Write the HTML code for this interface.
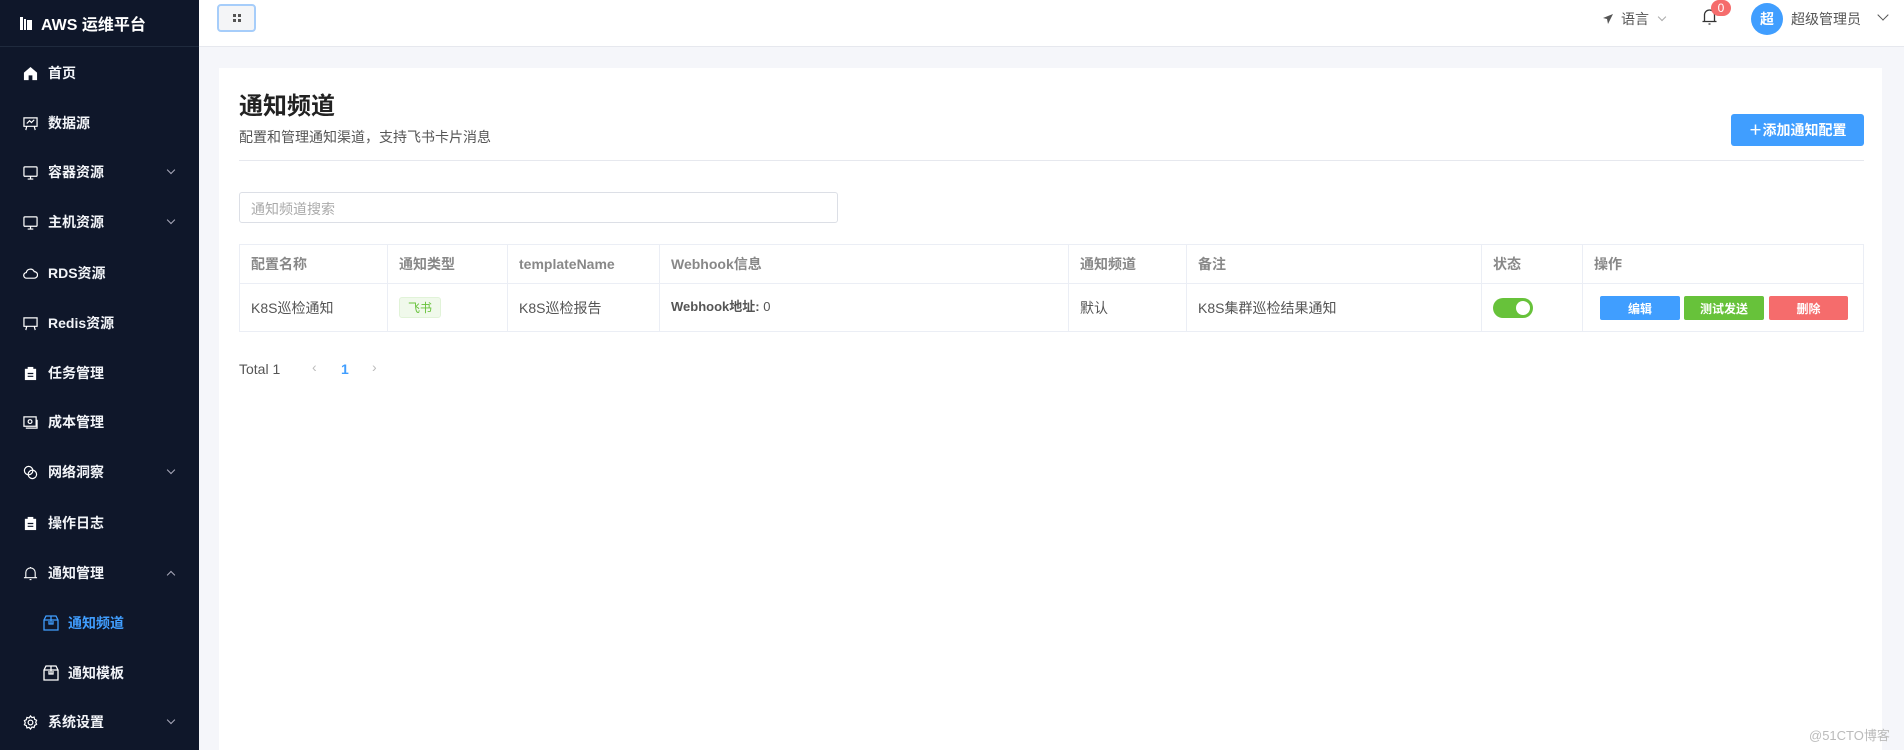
<!DOCTYPE html>
<html style="overflow:hidden;height:750px"><head><meta charset="utf-8">
<style>
*{box-sizing:border-box;margin:0;padding:0}
body{width:1904px;height:750px;overflow:hidden;background:#f5f6fa;font-family:"Liberation Sans","Noto Sans CJK SC",sans-serif;position:relative}
.side{position:absolute;left:0;top:0;width:199px;height:750px;background:#0f172a;color:#fff}
.logo{height:47px;border-bottom:1px solid #1f2a3d;display:flex;align-items:center;padding-left:20px;font-size:16px;font-weight:bold}
.mi{position:absolute;left:0;width:199px;height:40px;display:flex;align-items:center;font-size:14px;font-weight:bold;color:#f2f4f8}
.mi svg{position:absolute;left:23px}
.mi span{position:absolute;left:48px}
.mi .ar{position:absolute;left:168px;width:6px;height:6px;border-right:1px solid #aab;border-bottom:1px solid #aab;transform:rotate(45deg);top:15px}
.mi .up{transform:rotate(-135deg);top:19px}
.sub svg{left:43px}.sub span{left:68px}
.top{position:absolute;left:199px;top:0;right:0;height:47px;background:#fff;border-bottom:1px solid #e6e8ee}
.card{position:absolute;left:219px;top:68px;width:1663px;height:682px;background:#fff}
.abs{position:absolute}
table{position:absolute;left:20px;top:176px;width:1625px;border-collapse:collapse;font-size:14px;color:#555}
td,th{border:1px solid #ebeef5;text-align:left;padding-left:11px;font-weight:normal}
th{height:39px;color:#888;font-weight:bold}
td{height:48px}
.btn{position:absolute;top:12px;height:24px;color:#fff;font-size:12px;font-weight:bold;display:flex;align-items:center;justify-content:center;border-radius:2px}
</style></head><body>
<div class="side">
<div class="logo"><svg width="12" height="13" viewBox="0 0 12 13" style="margin-right:9px"><rect x="0" y="0" width="3" height="13" fill="#fff"/><rect x="4" y="2" width="2" height="11" fill="#fff"/><rect x="7" y="3" width="5" height="10" fill="#fff"/></svg>AWS 运维平台</div>
<div class="mi" style="top:53px"><svg width="15" height="15" viewBox="0 0 16 16"><path d="M8 1L1 7v8h5v-5h4v5h5V7z" fill="#fff"/></svg><span>首页</span></div>
<div class="mi" style="top:103px"><svg width="15" height="15" viewBox="0 0 16 16" fill="none" stroke="#fff" stroke-width="1.3"><path d="M1 2h14v9H1zM4 11l-1 4M12 11l1 4M4 8l3-3 2 2 3-3"/></svg><span>数据源</span></div>
<div class="mi" style="top:152px"><svg width="15" height="15" viewBox="0 0 16 16" fill="none" stroke="#fff" stroke-width="1.3"><rect x="1" y="2" width="14" height="10" rx="1"/><path d="M8 12v3M5 15h6"/></svg><span>容器资源</span><i class="ar"></i></div>
<div class="mi" style="top:202px"><svg width="15" height="15" viewBox="0 0 16 16" fill="none" stroke="#fff" stroke-width="1.3"><rect x="1" y="2" width="14" height="10" rx="1"/><path d="M8 12v3M5 15h6"/></svg><span>主机资源</span><i class="ar"></i></div>
<div class="mi" style="top:253px"><svg width="15" height="15" viewBox="0 0 16 16" fill="none" stroke="#fff" stroke-width="1.3"><path d="M4 13h8a3.5 3.5 0 000-7 4.5 4.5 0 00-8.5 1A3 3 0 004 13z"/></svg><span>RDS资源</span></div>
<div class="mi" style="top:303px"><svg width="15" height="15" viewBox="0 0 16 16" fill="none" stroke="#fff" stroke-width="1.3"><path d="M1 2h14v9H1zM4 11l-1 4M12 11l1 4"/></svg><span>Redis资源</span></div>
<div class="mi" style="top:353px"><svg width="15" height="15" viewBox="0 0 16 16"><path d="M2 3h12v12H2z" fill="#fff"/><rect x="5" y="1" width="6" height="3" fill="#fff"/><path d="M5 8h6M5 11h6" stroke="#0f172a" stroke-width="1.3"/></svg><span>任务管理</span></div>
<div class="mi" style="top:402px"><svg width="15" height="15" viewBox="0 0 16 16" fill="none" stroke="#fff" stroke-width="1.3"><rect x="1" y="2" width="13" height="10"/><circle cx="7.5" cy="7" r="2"/><path d="M3 14h12V5"/></svg><span>成本管理</span></div>
<div class="mi" style="top:452px"><svg width="15" height="15" viewBox="0 0 16 16" fill="none" stroke="#fff" stroke-width="1.3"><circle cx="6" cy="6" r="4.5"/><circle cx="10" cy="10" r="4.5"/></svg><span>网络洞察</span><i class="ar"></i></div>
<div class="mi" style="top:503px"><svg width="15" height="15" viewBox="0 0 16 16"><path d="M2 3h12v12H2z" fill="#fff"/><rect x="5" y="1" width="6" height="3" fill="#fff"/><path d="M5 8h6M5 11h6" stroke="#0f172a" stroke-width="1.3"/></svg><span>操作日志</span></div>
<div class="mi" style="top:553px"><svg width="15" height="15" viewBox="0 0 16 16" fill="none" stroke="#fff" stroke-width="1.2"><path d="M3 12V7a5 5 0 0110 0v5M1 12.5h14M8 1v1M7 14.5h2"/></svg><span>通知管理</span><i class="ar up"></i></div>
<div class="mi sub" style="top:603px;color:#409eff"><svg width="16" height="16" viewBox="0 0 16 16" fill="none" stroke="#409eff" stroke-width="1.3"><path d="M1 5l2-4h10l2 4v10H1zM1 5h14M8 1v8M6 6v3h4V6"/></svg><span>通知频道</span></div>
<div class="mi sub" style="top:653px"><svg width="16" height="16" viewBox="0 0 16 16" fill="none" stroke="#fff" stroke-width="1.3"><path d="M1 5l2-4h10l2 4v10H1zM1 5h14M8 1v8M6 6v3h4V6"/></svg><span>通知模板</span></div>
<div class="mi" style="top:702px"><svg width="15" height="15" viewBox="0 0 16 16" fill="none" stroke="#fff" stroke-width="1.3"><circle cx="8" cy="8" r="2.5"/><path d="M8 1l1.5 1.8 2.3-.5.6 2.3 2.1 1-.9 2.2.9 2.2-2.1 1-.6 2.3-2.3-.5L8 15l-1.5-1.8-2.3.5-.6-2.3-2.1-1 .9-2.2-.9-2.2 2.1-1 .6-2.3 2.3.5z"/></svg><span>系统设置</span><i class="ar"></i></div>
</div>
<div class="top">
<div class="abs" style="left:18px;top:4px;width:39px;height:28px;border:2px solid #a6cdfa;border-radius:4px;background:#f4f5f7;display:flex;align-items:center;justify-content:center"><svg width="8" height="8"><rect width="3" height="3" fill="#555"/><rect x="5" width="3" height="3" fill="#555"/><rect y="5" width="3" height="3" fill="#555"/><rect x="5" y="5" width="3" height="3" fill="#555"/></svg></div>
<div class="abs" style="left:1403px;top:9px;font-size:14px;color:#555;display:flex;align-items:center"><svg width="12" height="12" viewBox="0 0 12 12" style="margin-right:7px"><path d="M11 1L1 5l4 1 1 5z" fill="#555"/></svg>语言<span style="display:inline-block;width:6px;height:6px;border-right:1px solid #aaa;border-bottom:1px solid #aaa;transform:rotate(45deg);margin:-4px 0 0 10px"></span></div>
<svg class="abs" style="left:1502px;top:7px" width="17" height="19" viewBox="0 0 17 19" fill="none" stroke="#333" stroke-width="1.3"><path d="M3.5 14V8a5 5 0 0110 0v6M1.5 14.5h14M7.5 17h2"/></svg>
<div class="abs" style="left:1512px;top:0;width:20px;height:16px;background:#f56c6c;border-radius:8px;color:#fff;font-size:12px;text-align:center;line-height:16px">0</div>
<div class="abs" style="left:1552px;top:3px;width:32px;height:32px;border-radius:50%;background:#409eff;color:#fff;font-weight:bold;font-size:14px;text-align:center;line-height:32px">超</div>
<div class="abs" style="left:1592px;top:9px;font-size:14px;color:#555">超级管理员</div>
<div class="abs" style="left:1680px;top:11px;width:8px;height:8px;border-right:1.3px solid #555;border-bottom:1.3px solid #555;transform:rotate(45deg)"></div>
</div>
<div class="card">
<div class="abs" style="left:20px;top:18px;font-size:24px;font-weight:bold;color:#222">通知频道</div>
<div class="abs" style="left:20px;top:59px;font-size:14px;color:#555">配置和管理通知渠道，支持飞书卡片消息</div>
<div class="abs" style="left:1512px;top:46px;width:133px;height:32px;background:#409eff;border-radius:3px;color:#fff;font-size:14px;font-weight:bold;display:flex;align-items:center;justify-content:center">＋添加通知配置</div>
<div class="abs" style="left:20px;top:92px;width:1625px;height:1px;background:#e6e8ee"></div>
<div class="abs" style="left:20px;top:124px;width:599px;height:31px;border:1px solid #dcdfe6;border-radius:3px;font-size:14px;color:#aaa;padding:6px 11px">通知频道搜索</div>
<table>
<tr><th style="width:148px">配置名称</th><th style="width:120px">通知类型</th><th style="width:152px">templateName</th><th style="width:409px">Webhook信息</th><th style="width:118px">通知频道</th><th style="width:295px">备注</th><th style="width:101px">状态</th><th>操作</th></tr>
<tr><td>K8S巡检通知</td><td><span style="display:inline-block;padding:1px 8px;background:#f0f9eb;border:1px solid #e1f3d8;color:#67c23a;font-size:12px;border-radius:3px">飞书</span></td><td>K8S巡检报告</td><td style="vertical-align:top;padding-top:12px;font-size:13px"><b>Webhook地址:</b> 0</td><td>默认</td><td>K8S集群巡检结果通知</td><td><div style="width:40px;height:20px;border-radius:10px;background:#67c23a;position:relative"><div style="position:absolute;right:3px;top:3px;width:14px;height:14px;border-radius:50%;background:#fff"></div></div></td><td style="position:relative"><div class="btn" style="left:17px;width:80px;background:#409eff">编辑</div><div class="btn" style="left:101px;width:80px;background:#67c23a">测试发送</div><div class="btn" style="left:186px;width:79px;background:#f56c6c">删除</div></td></tr>
</table>
<div class="abs" style="left:20px;top:293px;font-size:14px;color:#555">Total 1</div>
<div class="abs" style="left:93px;top:291px;font-size:14px;color:#bbb">‹</div>
<div class="abs" style="left:122px;top:293px;font-size:14px;color:#409eff;font-weight:bold">1</div>
<div class="abs" style="left:153px;top:291px;font-size:14px;color:#bbb">›</div>
</div>
<div class="abs" style="left:1809px;top:725px;font-size:13px;color:#bbb">@51CTO博客</div>
</body></html>
